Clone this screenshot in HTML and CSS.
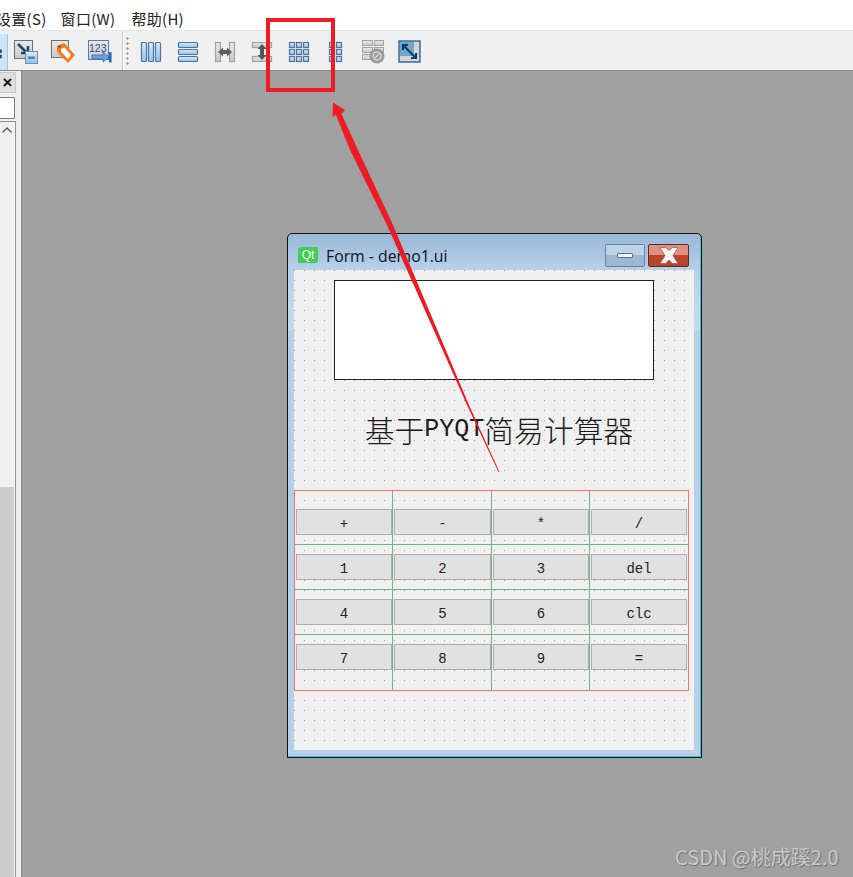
FILE: index.html
```html
<!DOCTYPE html>
<html lang="zh">
<head>
<meta charset="utf-8">
<title>Qt Designer</title>
<link rel="stylesheet" href="styles.css">
</head>
<body>
<svg class="defs" width="0" height="0"><defs>
  <linearGradient id="blue" x1="0" y1="0" x2="0" y2="1"><stop offset="0" stop-color="#d4ecfd"/><stop offset="1" stop-color="#8cc4f0"/></linearGradient>
  <linearGradient id="grey" x1="0" y1="0" x2="0" y2="1"><stop offset="0" stop-color="#e8e8e8"/><stop offset="1" stop-color="#c8c8c8"/></linearGradient>
</defs></svg>
<header class="menubar">
  <span class="menu first">设置(S)</span>
  <span class="menu">窗口(W)</span>
  <span class="menu">帮助(H)</span>
</header>
<div class="toolbar">
  <div class="tool-active"><svg width="8" height="24" viewBox="0 0 8 24"><path d="M0 9h2v4H0zM0 15h2v4H0z" fill="#27456e"/></svg></div>
  <svg class="ico" viewBox="0 0 24 24"><rect x="0.5" y="0.5" width="18" height="18" fill="url(#grey)" stroke="#6f6f6f"/><path d="M4 4l9 9M14 6v7H7" fill="none" stroke="#27456e" stroke-width="2.6"/><rect x="11.5" y="11.5" width="12" height="12" fill="url(#blue)" stroke="#6f8db5"/><rect x="14" y="16.500" width="7" height="2.600" fill="#5f7fa8"/></svg>
  <svg class="ico" viewBox="0 0 24 24"><rect x="0.5" y="0.5" width="17" height="17" fill="url(#grey)" stroke="#6f6f6f"/><path d="M6 6l7-3 11 12-7 8L6 12z" fill="#f47b20"/><path d="M10 9l3.500-1.500 6.500 7.500-3 4-7-7.500z" fill="#fff"/><circle cx="8.500" cy="6.500" r="1" fill="#333"/></svg>
  <svg class="ico" viewBox="0 0 24 24"><rect x="0.5" y="0.5" width="20" height="19" fill="url(#grey)" stroke="#5d7ba3"/><text x="1" y="12" class="ico-text">123</text><path d="M4 15h11v-3l6 5-6 5v-3H4z" fill="#6aa5e3" stroke="#2e5c93" stroke-width="0.7"/><rect x="21" y="12" width="2.600" height="10.500" fill="#2e6cb5"/></svg>
  <div class="sep"></div>
  <div class="grip"></div>
  <svg class="ico" viewBox="0 0 24 24"><g fill="url(#blue)" stroke="#54729c" stroke-width="1.200"><rect x="2.500" y="2.500" width="5" height="19" rx="1"/><rect x="9.500" y="2.500" width="5" height="19" rx="1"/><rect x="16.500" y="2.500" width="5" height="19" rx="1"/></g></svg>
  <svg class="ico" viewBox="0 0 24 24"><g fill="url(#blue)" stroke="#54729c" stroke-width="1.200"><rect x="2.500" y="2.500" width="19" height="5" rx="1"/><rect x="2.500" y="9.500" width="19" height="5" rx="1"/><rect x="2.500" y="16.500" width="19" height="5" rx="1"/></g></svg>
  <svg class="ico" viewBox="0 0 24 24"><g fill="url(#grey)" stroke="#a3a3a3" stroke-width="1.200"><rect x="2.500" y="2.500" width="5" height="19"/><rect x="16.500" y="2.500" width="5" height="19"/></g><path d="M5 12l5-4.500V10h4V7.500l5 4.500-5 4.500V14h-4v2.500z" fill="#5e5e5e"/></svg>
  <svg class="ico" viewBox="0 0 24 24"><g fill="url(#grey)" stroke="#a3a3a3" stroke-width="1.200"><rect x="2.500" y="2.500" width="19" height="5"/><rect x="2.500" y="16.500" width="19" height="5"/></g><path d="M12 4l4.500 5H14v6h2.500L12 20l-4.500-5H10V9H7.500z" fill="#555"/></svg>
  <svg class="ico" viewBox="0 0 24 24"><g fill="url(#blue)" stroke="#54729c" stroke-width="1.200"><rect x="2.500" y="2.500" width="5" height="5"/><rect x="9.500" y="2.500" width="5" height="5"/><rect x="16.500" y="2.500" width="5" height="5"/><rect x="2.500" y="9.500" width="5" height="5"/><rect x="9.500" y="9.500" width="5" height="5"/><rect x="16.500" y="9.500" width="5" height="5"/><rect x="2.500" y="16.500" width="5" height="5"/><rect x="9.500" y="16.500" width="5" height="5"/><rect x="16.500" y="16.500" width="5" height="5"/></g></svg>
  <svg class="ico" viewBox="0 0 24 24"><g fill="url(#blue)" stroke="#54729c" stroke-width="1.200"><rect x="5.500" y="2.500" width="5" height="5"/><rect x="12.500" y="2.500" width="5" height="5"/><rect x="5.500" y="9.500" width="5" height="5"/><rect x="12.500" y="9.500" width="5" height="5"/><rect x="5.500" y="16.500" width="5" height="5"/><rect x="12.500" y="16.500" width="5" height="5"/></g></svg>
  <svg class="ico" viewBox="0 0 24 24"><g fill="url(#grey)" stroke="#a3a3a3"><rect x="1.500" y="0.500" width="10" height="5"/><rect x="13.500" y="0.500" width="9" height="5"/><rect x="1.500" y="7.500" width="10" height="5"/><rect x="13.500" y="7.500" width="9" height="5"/><rect x="1.500" y="14.500" width="10" height="5"/></g><circle cx="16" cy="16" r="7.500" fill="#9a9a9a"/><circle cx="16" cy="16" r="4" fill="none" stroke="#d6d6d6" stroke-width="1.500"/><path d="M13 19l6-6" stroke="#d6d6d6" stroke-width="1.500"/></svg>
  <svg class="ico" viewBox="0 0 24 24"><rect x="1" y="1" width="21" height="21" fill="#d4d4d4" stroke="#2f6296" stroke-width="1.400"/><path d="M2 2h14v14H2z" fill="#6fa9c9"/><path d="M5 5l13 13M5 10V5h5M18 13v5h-5" fill="none" stroke="#0e3f6e" stroke-width="2.200"/></svg>
</div>
<main class="workspace">
  <aside class="sidebar">
    <div class="dock-title"><span class="dock-close">×</span></div>
    <div class="dock-input"></div>
    <div class="dock-scroll">
      <div class="scroll-up"><svg width="10" height="6" viewBox="0 0 10 6"><path d="M0.500 5.500L5 1l4.500 4.500" fill="none" stroke="#555" stroke-width="1.400"/></svg></div>
      <div class="scroll-thumb"></div>
      <div class="scroll-track"></div>
    </div>
  </aside>
  <div class="canvas">
    <section class="window">
      <div class="titlebar">
        <span class="qt-logo">Qt</span>
        <span class="win-title">Form - demo1.ui</span>
        <span class="win-btn win-min"><i class="min-glyph"></i></span>
        <span class="win-btn win-close"><svg width="20" height="17" viewBox="0 0 20 17"><path d="M1 0.500h5.500L10 3.500l3.500-3h5.500l-5 8 5 8h-5.500L10 13l-3.500 3.500H1l5-8z" fill="#f3f3f3" stroke="#7d4a3f" stroke-width="0.600"/></svg></span>
      </div>
      <div class="client">
        <div class="line-edit"></div>
        <div class="heading">基于<span class="latin">PYQT</span>简易计算器</div>
        <div class="layout">
          <div class="cell top"><button class="key">+</button></div>
          <div class="cell top wide"><button class="key">-</button></div>
          <div class="cell top"><button class="key">*</button></div>
          <div class="cell top end"><button class="key">/</button></div>
          <div class="cell"><button class="key">1</button></div>
          <div class="cell wide"><button class="key">2</button></div>
          <div class="cell"><button class="key">3</button></div>
          <div class="cell end"><button class="key">del</button></div>
          <div class="cell"><button class="key">4</button></div>
          <div class="cell wide"><button class="key">5</button></div>
          <div class="cell"><button class="key">6</button></div>
          <div class="cell end"><button class="key">clc</button></div>
          <div class="cell last"><button class="key">7</button></div>
          <div class="cell last wide"><button class="key">8</button></div>
          <div class="cell last"><button class="key">9</button></div>
          <div class="cell last end"><button class="key">=</button></div>
        </div>
      </div>
    </section>
  </div>
</main>
<div class="callout"></div>
<svg class="arrow" width="853" height="877" viewBox="0 0 853 877"><path d="M499.500 472L469 405 393 225 358 150 341.500 114 345 110 333 102.500 332.500 117 336 115 350 150 387 225 467 405 498.500 472z" fill="#ed1c24"/></svg>
<div class="watermark">CSDN @桃成蹊2.0</div>
</body>
</html>
```
FILE: styles.css
```css
* { box-sizing: border-box; }
html, body { margin: 0; padding: 0; }
body {
  width: 853px;
  height: 877px;
  overflow: hidden;
  position: relative;
  background: #fff;
  font-family: "Noto Sans CJK SC", "Noto Sans", sans-serif;
}
.defs { position: absolute; }
.menubar {
  height: 30px;
  background: #fff;
  display: flex;
  align-items: center;
  padding-top: 6px;
  font-size: 15px;
  letter-spacing: 0.3px;
  color: #222;
  overflow: hidden;
}
.menu { margin-right: 16px; white-space: nowrap; }
.menu.first { margin-left: -4px; margin-right: 14px; }
.toolbar {
  height: 41px;
  background: #f0f0f0;
  border-top: 1px solid #e6e6e6;
  border-bottom: 1px solid #8a8a8a;
  display: flex;
  align-items: center;
  gap: 13px;
}
.tool-active {
  width: 8px;
  height: 36px;
  margin-right: -7px;
  margin-top: 2px;
  background: #cce4f7;
  border-right: 1px solid #94c6ee;
  display: flex;
  align-items: center;
  flex: none;
}
.ico { width: 24px; height: 24px; flex: none; margin-top: 2px; }
.ico-text { font: 10.500px "Liberation Sans", sans-serif; fill: #1f4f8f; }
.sep {
  width: 2px;
  height: 39px;
  margin-left: -3px;
  margin-right: -11px;
  background: #c8c8c8;
  border-right: 1px solid #fff;
  flex: none;
}
.grip {
  width: 3px;
  height: 30px;
  margin-right: -3px;
  background-image: radial-gradient(circle, #a4a4a4 1px, transparent 1.200px);
  background-size: 3px 5px;
  flex: none;
}
.workspace {
  height: 806px;
  display: flex;
  background: #f0f0f0;
}
.sidebar {
  width: 22px;
  flex: none;
  background: #f0f0f0;
  border-right: 1px solid #8c8c8c;
  padding-top: 1px;
  display: flex;
  flex-direction: column;
}
.dock-title {
  width: 16px;
  height: 21px;
  background: #e0e0e0;
  border: 1px solid #c8c8c8;
  border-left: 0;
  display: flex;
  align-items: center;
  justify-content: center;
  font: bold 17px "Liberation Sans", sans-serif;
  color: #111;
}
.dock-close { line-height: 1; }
.dock-input {
  width: 15px;
  height: 22px;
  margin-top: 4px;
  background: #fff;
  border: 1px solid #7f7f7f;
  border-left: 0;
}
.dock-scroll {
  width: 16px;
  flex: 1;
  margin-top: 2px;
  background: #fafafa;
  border: 1px solid #8f8f9f;
  border-left: 0;
  border-bottom: 0;
  display: flex;
  flex-direction: column;
}
.scroll-up {
  width: 14px;
  height: 16px;
  background: #f0f0f0;
  display: flex;
  align-items: center;
  justify-content: center;
  flex: none;
}
.scroll-thumb {
  width: 14px;
  height: 349px;
  flex: none;
  background: #f0f0f0;
}
.scroll-track {
  width: 14px;
  flex: 1;
  background: #cdcdcd;
}
.canvas {
  flex: 1;
  position: relative;
  background: #a0a0a0;
}
.window {
  position: absolute;
  left: 265px;
  top: 162px;
  width: 415px;
  height: 525px;
  border: 1px solid #101010;
  border-radius: 5px 5px 0 0;
  box-shadow: inset -1px -1px 0 #2bc6d8;
  padding: 0 7px 7px 6px;
  background: linear-gradient(#9ab7d5 0, #b6d0ea 36px, #c6dbf0 97px, #b5cfe9 97px);
  display: flex;
  flex-direction: column;
}
.titlebar {
  height: 36px;
  flex: none;
  display: flex;
  align-items: flex-start;
  padding-top: 10px;
}
.qt-logo {
  width: 20px;
  height: 16px;
  margin-left: 4px;
  margin-top: 3px;
  background: #41cd52;
  border-radius: 3px 0 3px 0;
  color: #fff;
  font: 12px/16px "Liberation Sans", sans-serif;
  text-align: center;
  flex: none;
}
.win-title {
  margin-left: 8px;
  margin-top: 1px;
  font: 15.800px/22px "Open Sans", "Noto Sans", sans-serif;
  color: #0d1220;
  flex: 1;
}
.win-btn {
  height: 23px;
  border-radius: 2px;
  display: flex;
  align-items: center;
  justify-content: center;
  flex: none;
}
.win-min {
  width: 40px;
  margin-right: 3px;
  border: 1px solid #6b84a4;
  background: linear-gradient(#bdd3e8 50%, #9db6d1 50%);
}
.min-glyph {
  display: block;
  width: 16px;
  height: 5px;
  background: #f4f4f4;
  border: 1px solid #5c6f86;
  border-radius: 1px;
}
.win-close {
  width: 41px;
  margin-right: 5px;
  border: 1px solid #5c2a32;
  background: linear-gradient(#e0907f 50%, #b9452a 50%);
}
.client {
  flex: 1;
  background-color: #f0f0f0;
  background-image: radial-gradient(circle at 0.5px 0.5px, #9c9c9c 0.6px, transparent 0.7px);
  background-size: 10px 10px;
  display: flex;
  flex-direction: column;
}
.line-edit {
  width: 320px;
  height: 100px;
  margin: 10px 0 0 40px;
  background: #fff;
  border: 1px solid #222;
  flex: none;
}
.heading {
  height: 110px;
  flex: none;
  display: flex;
  align-items: center;
  justify-content: center;
  padding: 0 0 12px 10px;
  font-size: 29.800px;
  color: #1a1a1a;
  white-space: nowrap;
  font-weight: 300;
}
.latin { font: 25px "Liberation Mono", monospace; }
.layout {
  width: 395px;
  height: 201px;
  border: 1px solid #ff7070;
  display: grid;
  grid-template-columns: 98px 99px 98px 98px;
  grid-template-rows: 54px 45px 45px 55px;
}
.cell {
  border-right: 1px solid #72b67c;
  border-bottom: 1px solid #72b67c;
  padding: 9px 1px 0;
}
.cell.top { padding-top: 18px; }
.cell.end { border-right: 0; }
.cell.last { border-bottom: 0; }
.key {
  display: block;
  width: 96px;
  height: 26px;
  padding: 3px 0 0;
  margin: 0;
  background: #e1e1e1;
  border: 1px solid #adadad;
  font: 14px "Liberation Mono", monospace;
  color: #222;
}
.cell.wide .key { width: 97px; }
.callout {
  position: absolute;
  left: 266px;
  top: 18px;
  width: 69px;
  height: 74px;
  border: 4px solid #ed1c24;
}
.arrow {
  position: absolute;
  left: 0;
  top: 0;
  pointer-events: none;
}
.watermark {
  position: absolute;
  left: 675px;
  top: 843px;
  font-size: 20px;
  line-height: 28px;
  color: #c9c9c9;
  text-shadow: 1px 1px 1px #707070;
  white-space: nowrap;
}
```
